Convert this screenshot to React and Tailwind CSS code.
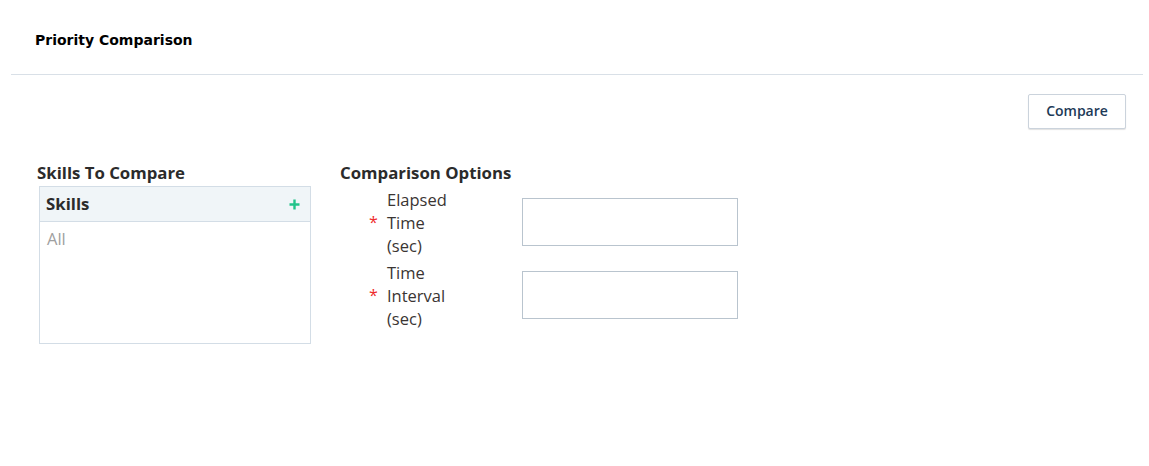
export default function App() {
  return (
    <div className="w-[1149px] h-[466px] bg-white font-['Open_Sans',sans-serif] text-[#333]">
      {/* Header */}
      <div className="ml-[11px] mr-[6px] border-b border-[#d9e0e7] h-[75px] flex items-center px-6">
        <h1 className="font-['DejaVu_Sans',sans-serif] font-bold text-[14px] text-black mt-[6px]">
          Priority Comparison
        </h1>
      </div>

      {/* Toolbar */}
      <div className="flex justify-end pr-[23px] pt-[19px]">
        <button className="w-[98px] h-[35px] pb-[2px] border border-[#cbd3dc] rounded-[2px] shadow-[0_1px_1px_rgba(0,0,0,0.12)] text-[14px] font-semibold text-[#1d3a57] bg-white">
          Compare
        </button>
      </div>

      {/* Content */}
      <div className="flex pl-[37px] pt-[33px]">
        {/* Skills */}
        <div className="w-[274px]">
          <h2 className="text-[16.8px] font-bold leading-[22px] text-[#2b2b2b]">Skills To Compare</h2>
          <div className="ml-[2px] mt-[2px] w-[272px] h-[158px] border border-[#d3dde6]">
            <div className="h-[35px] bg-[#f0f5f8] border-b border-[#d3dde6] flex items-center justify-between pl-[6px] pr-[10px]">
              <span className="text-[16.8px] font-bold text-[#2b2b2b]">Skills</span>
              <svg width="11" height="11" viewBox="0 0 11 11">
                <path d="M5.5 0.5v10M0.5 5.5h10" stroke="#22c38a" strokeWidth="2.4" />
              </svg>
            </div>
            <div className="pl-[7px] pt-[6px] text-[16.5px] leading-[22px] text-[#a0a0a0]">All</div>
          </div>
        </div>

        {/* Options */}
        <div className="ml-[29px]">
          <h2 className="text-[16.8px] font-bold leading-[22px] text-[#2b2b2b]">Comparison Options</h2>
          <div className="flex flex-col gap-[4px] pt-[4px]">
            {["Elapsed Time (sec)", "Time Interval (sec)"].map((label) => (
              <div key={label} className="flex items-start">
                <span className="w-[18px] pl-[29px] pt-[23px] box-content text-[#ee2b2b] text-[16px] leading-[23px]">*</span>
                <span className="w-[73px] text-[16.5px] leading-[23px] text-[#3a3533]">{label}</span>
                <input className="ml-[62px] mt-[10px] w-[216px] h-[48px] border border-[#b9c4ce] outline-none" />
              </div>
            ))}
          </div>
        </div>
      </div>
    </div>
  );
}
